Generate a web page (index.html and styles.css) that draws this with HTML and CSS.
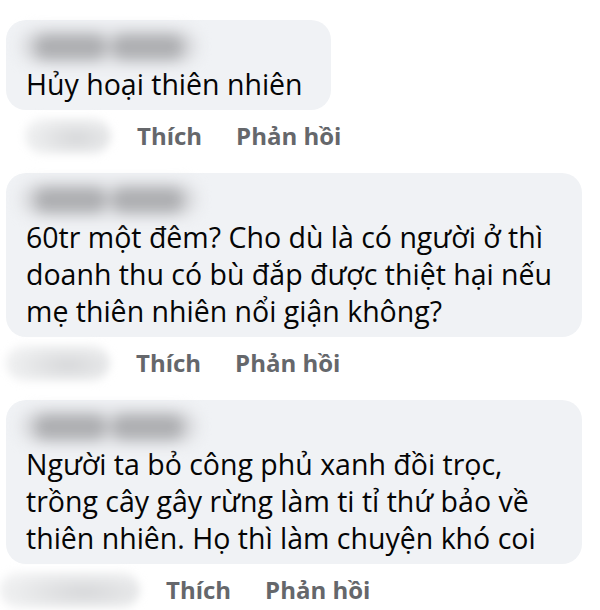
FILE: index.html
```html
<!DOCTYPE html>
<html lang="vi">
<head>
    <meta charset="UTF-8">
    <meta name="viewport" content="width=device-width, initial-scale=1.0">
    <title>Bình luận</title>
    <link rel="stylesheet" href="styles.css">
</head>
<body>
    <div class="comments">
        <div class="comment">
            <div class="bubble">
                <div class="name"><span></span><span></span></div>
                <p class="text">Hủy hoại thiên nhiên</p>
            </div>
            <div class="actions">
                <div class="smudge smudge-short"></div>
                <span class="action">Thích</span>
                <span class="action">Phản hồi</span>
            </div>
        </div>

        <div class="comment">
            <div class="bubble bubble-wide">
                <div class="name"><span></span><span></span></div>
                <p class="text">60tr một đêm? Cho dù là có người ở thì doanh thu có bù đắp được thiệt hại nếu mẹ thiên nhiên nổi giận không?</p>
            </div>
            <div class="actions">
                <div class="smudge"></div>
                <span class="action">Thích</span>
                <span class="action">Phản hồi</span>
            </div>
        </div>

        <div class="comment">
            <div class="bubble bubble-wide">
                <div class="name"><span></span><span></span></div>
                <p class="text">Người ta bỏ công phủ xanh đồi trọc, trồng cây gây rừng làm ti tỉ thứ bảo về thiên nhiên. Họ thì làm chuyện khó coi</p>
            </div>
            <div class="actions">
                <div class="smudge smudge-long"></div>
                <span class="action">Thích</span>
                <span class="action">Phản hồi</span>
            </div>
        </div>
    </div>
</body>
</html>
```

FILE: styles.css
```css
body {
    margin: 0;
    background: #fff;
    font-family: "Open Sans", "Noto Sans", sans-serif;
    color: #050505;
    overflow: hidden;
}
.comments {
    padding: 20px 6px 0;
}
.comment {
    margin-bottom: 15px;
}
.bubble {
    width: fit-content;
    background: #f0f2f5;
    border-radius: 20px;
    padding: 9px 28px 7px 20px;
}
.bubble-wide {
    width: 528px;
}
.name {
    display: flex;
    gap: 4px;
    width: 178px;
    height: 35px;
    margin-left: -6px;
    border-radius: 18px;
    background: #dcdde0;
    filter: blur(7px);
    align-items: center;
    padding: 0 14px;
    box-sizing: border-box;
}
.name span {
    height: 26px;
    flex: 1;
    border-radius: 13px;
    background: #aeafb2;
}
.text {
    margin: 0;
    font-size: 28.5px;
    line-height: 37px;
    padding-top: 2px;
}
.actions {
    display: flex;
    align-items: center;
    height: 44px;
    padding-top: 4px;
}
.smudge {
    width: 104px;
    height: 36px;
    margin-right: 26px;
    border-radius: 18px;
    background: radial-gradient(ellipse at 60% 55%, #d6d7d9 0%, #ecedee 60%, #f8f8f9 100%);
    filter: blur(4px);
}
.smudge-short {
    width: 86px;
    margin-left: 19px;
}
.smudge-long {
    width: 140px;
    margin-left: -6px;
}
.action {
    font-size: 24px;
    font-weight: 700;
    color: #65676b;
    line-height: 44px;
    margin-right: 34px;
}
```
